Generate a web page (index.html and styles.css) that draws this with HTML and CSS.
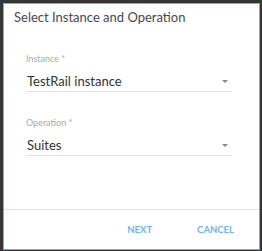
FILE: index.html
```html
<!DOCTYPE html>
<html lang="en">
<head>
  <meta charset="UTF-8"/>
  <title>Select Instance and Operation</title>
  <link rel="stylesheet" href="styles.css">
</head>
<body>
  <!-- dialog -->
  <div class="dialog">
    <h2 class="dialog-title">Select Instance and Operation</h2>

    <div class="dialog-body">
      <div class="field">
        <label class="field-label">Instance *</label>
        <div class="select">
          <span class="select-value">TestRail instance</span>
          <span class="select-arrow"></span>
        </div>
      </div>
      <div class="field">
        <label class="field-label">Operation *</label>
        <div class="select">
          <span class="select-value">Suites</span>
          <span class="select-arrow"></span>
        </div>
      </div>
    </div>

    <div class="dialog-actions">
      <button class="btn">Next</button>
      <button class="btn">Cancel</button>
    </div>
  </div>
</body>
</html>
```

FILE: styles.css
```css
*{margin:0;padding:0;box-sizing:border-box}
body{background:#363636;padding:3px 2px 1px 3px;font-family:'Lato','Liberation Sans',sans-serif}
.dialog{width:257px;height:247px;background:#fff;border:1px solid #3fc1f3;display:flex;flex-direction:column}
.dialog-title{font-size:13px;line-height:20px;font-weight:400;color:#4a4a4a;padding:3px 0 0 10px}
.dialog-body{flex:1;padding:26px 28px 0 22px;display:flex;flex-direction:column;gap:25px}
.field-label{display:block;font-size:9px;line-height:12px;color:#aaa;margin-bottom:6px}
.select{display:flex;align-items:center;height:21px;border-bottom:1px solid #e3e3e3;padding-left:1px}
.select-value{flex:1;font-size:13px;line-height:20px;color:#333}
.select-arrow{width:0;height:0;border-left:3px solid transparent;border-right:3px solid transparent;border-top:3px solid #888;margin-right:3px}
.dialog-actions{height:40px;border-top:1px solid #e3e3e3;display:flex;justify-content:flex-end;align-items:center;gap:21px;padding-right:13px}
.btn{background:none;border:none;font:700 9.5px/14px 'Lato','Liberation Sans',sans-serif;text-transform:uppercase;color:#6cb6f2;padding:4px 12px;cursor:pointer}
```
